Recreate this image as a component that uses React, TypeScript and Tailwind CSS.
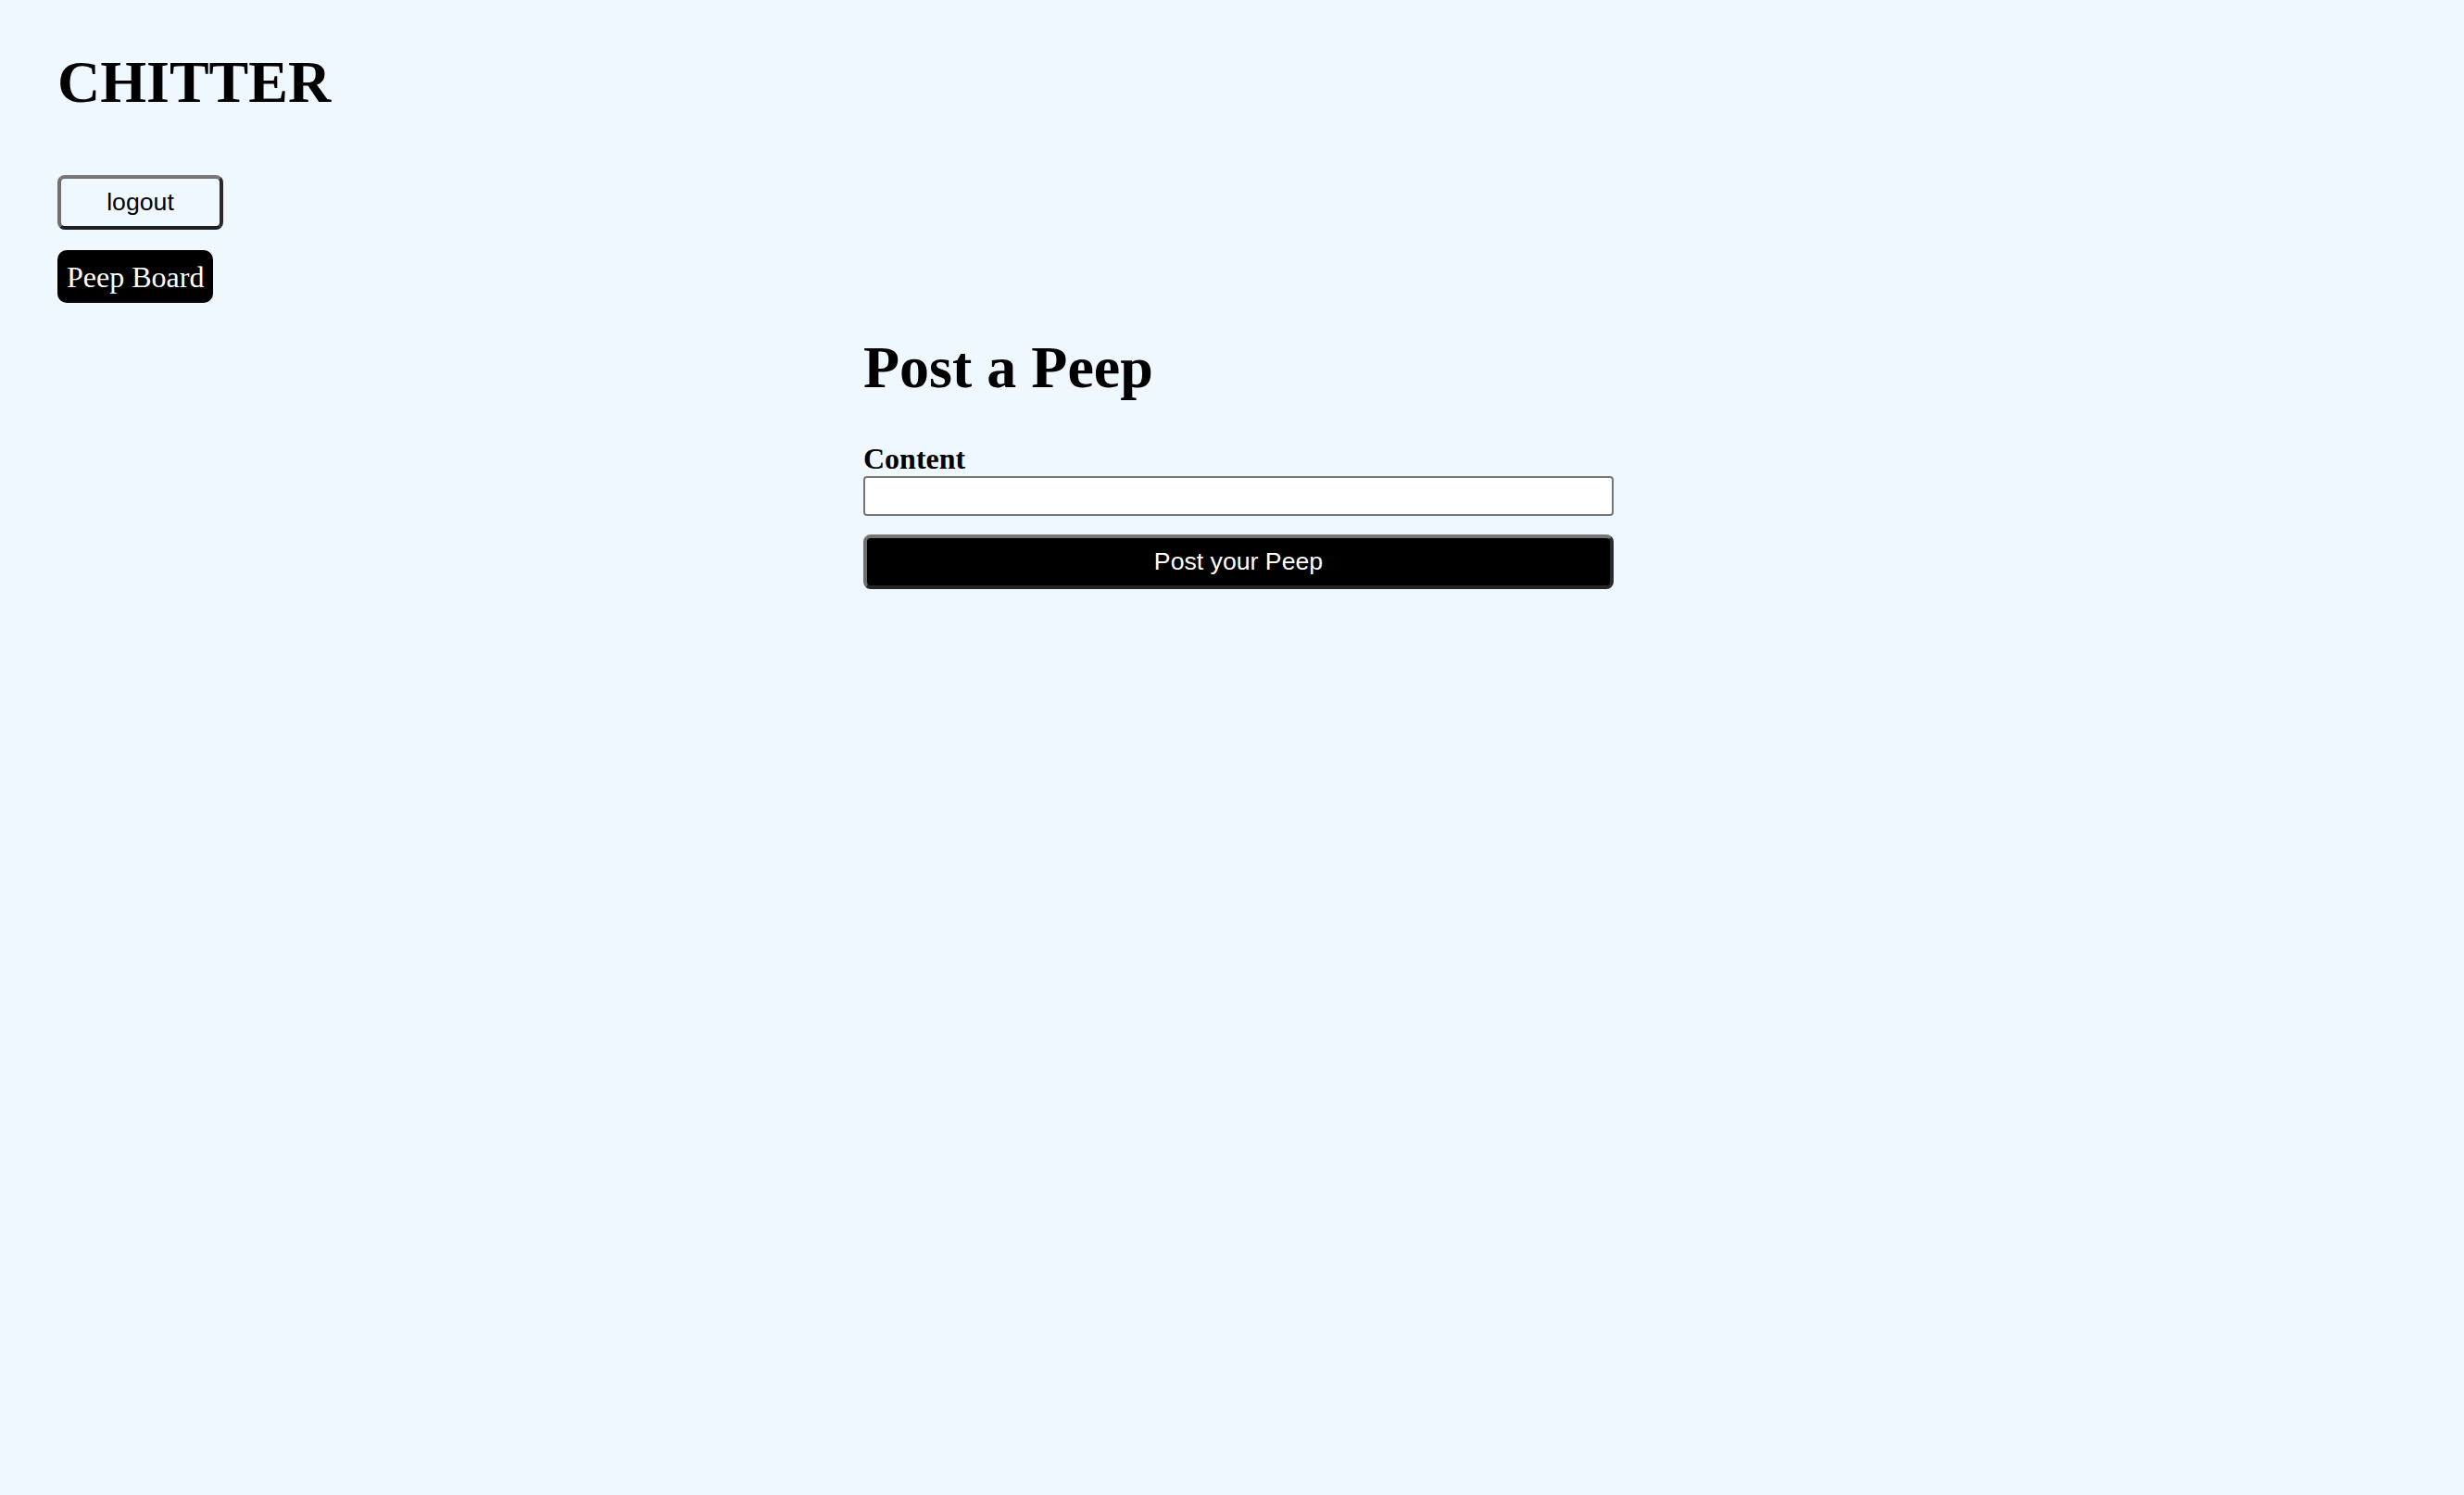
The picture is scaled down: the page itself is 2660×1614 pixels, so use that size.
export default function App() {
  return (
    <div className="min-h-[1614px] w-full bg-[#f0f8ff] text-black font-['Liberation_Serif','Times_New_Roman',serif]">
      {/* header / nav */}
      <div className="flex flex-col items-start pl-[62px] pt-[57px]">
        <h1 className="text-[64px] leading-[64px] font-bold">CHITTER</h1>
        <button
          type="button"
          className="mt-[68px] flex h-[59px] w-[179px] items-center justify-center rounded-[8px] border-[4px] border-t-[#767676] border-l-[#6f6f6f] border-b-[#1f1f1f] border-r-[#2a2a2a] bg-[#f0f8ff] font-['Liberation_Sans',Arial,sans-serif] text-[26.67px] leading-none"
        >
          logout
        </button>
        <a
          href="#"
          className="mt-[22px] flex h-[57px] items-center rounded-[10px] bg-black px-[10px] text-[32px] leading-none text-white"
        >
          Peep Board
        </a>
      </div>

      {/* post form */}
      <div className="flex justify-center pl-[14px]">
        <form className="mt-[38px] flex w-[810px] flex-col" onSubmit={(e) => e.preventDefault()}>
          <h1 className="text-[64px] leading-[64px] font-bold">Post a Peep</h1>
          <label htmlFor="content" className="mt-[48px] block h-[37px] text-[32px] leading-[37px] font-bold">
            Content
          </label>
          <input
            id="content"
            type="text"
            className="h-[43px] w-full rounded-[4px] border-2 border-[#767676] bg-white px-2 font-['Liberation_Sans',Arial,sans-serif] text-[26.67px] outline-none"
          />
          <button
            type="submit"
            className="mt-[20px] flex h-[59px] w-full items-center justify-center rounded-[8px] border-[4px] border-t-[#767676] border-l-[#6f6f6f] border-b-[#262626] border-r-[#2a2a2a] bg-black font-['Liberation_Sans',Arial,sans-serif] text-[26.67px] leading-none text-white"
          >
            Post your Peep
          </button>
        </form>
      </div>
    </div>
  );
}
